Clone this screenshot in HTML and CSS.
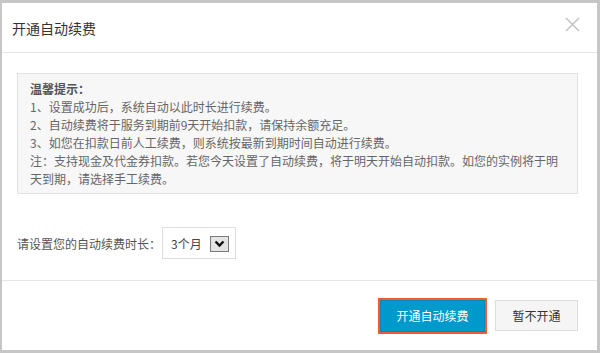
FILE: index.html
```html
<!DOCTYPE html>
<html lang="zh-CN">
<head>
    <meta charset="UTF-8">
    <title>开通自动续费</title>
    <link rel="stylesheet" href="styles.css">
</head>
<body>
    <div class="dialog">
        <div class="dialog-header">
            <h3 class="dialog-title">开通自动续费</h3>
            <span class="dialog-close">
                <svg width="15" height="15" viewBox="0 0 15 15">
                    <path d="M1 1 L14 14 M14 1 L1 14" stroke="#c4c4c4" stroke-width="1.6" fill="none"/>
                </svg>
            </span>
        </div>

        <div class="dialog-body">
            <div class="tips">
                <div class="tips-title">温馨提示：</div>
                <div>1、设置成功后，系统自动以此时长进行续费。</div>
                <div>2、自动续费将于服务到期前9天开始扣款，请保持余额充足。</div>
                <div>3、如您在扣款日前人工续费，则系统按最新到期时间自动进行续费。</div>
                <div>注：支持现金及代金券扣款。若您今天设置了自动续费，将于明天开始自动扣款。如您的实例将于明天到期，请选择手工续费。</div>
            </div>

            <div class="form-row">
                <span class="form-label">请设置您的自动续费时长：</span>
                <div class="select">
                    <span class="select-value">3个月</span>
                    <span class="select-arrow">
                        <svg width="11" height="8" viewBox="0 0 11 8">
                            <path d="M1.5 1.5 L5.5 5.5 L9.5 1.5" stroke="#111" stroke-width="2.4" fill="none"/>
                        </svg>
                    </span>
                </div>
            </div>
        </div>

        <div class="dialog-footer">
            <button class="btn btn-primary">开通自动续费</button>
            <button class="btn btn-default">暂不开通</button>
        </div>
    </div>
</body>
</html>
```

FILE: styles.css
```css
* {
    margin: 0;
    padding: 0;
    box-sizing: border-box;
}

body {
    font-family: "Noto Sans CJK SC", "Noto Sans", sans-serif;
    font-size: 12px;
    color: #555;
    background: #fff;
}

.dialog {
    width: 600px;
    height: 353px;
    border: 3px solid #c6c6c6;
    border-left-width: 2px;
    background: #fff;
    display: flex;
    flex-direction: column;
}

/* header */
.dialog-header {
    height: 50px;
    border-bottom: 1px solid #e5e5e5;
    display: flex;
    align-items: center;
    padding: 0 17px 0 10px;
}

.dialog-title {
    font-size: 14px;
    font-weight: normal;
    color: #333;
    line-height: 20px;
}

.dialog-close {
    margin-left: auto;
    align-self: flex-start;
    margin-top: 14px;
    display: flex;
}

/* body */
.dialog-body {
    padding: 20px 19px 21px 15px;
    border-bottom: 1px solid #e5e5e5;
}

.tips {
    background: #f7f7f7;
    border: 1px solid #e1e1e1;
    padding: 6px 15px 5px 12px;
    line-height: 18px;
    color: #666;
}

.tips-title {
    font-weight: bold;
    color: #555;
}

.form-row {
    margin-top: 33px;
    display: flex;
    align-items: center;
}

.form-label {
    color: #555;
}

.select {
    margin-left: 1px;
    width: 74px;
    height: 32px;
    border: 1px solid #ddd;
    display: flex;
    align-items: center;
    justify-content: space-between;
    padding: 0 6px 0 8px;
    color: #444;
}

.select-arrow {
    width: 19px;
    height: 16px;
    margin-top: 2px;
    border: 1px solid #7a7a7a;
    background: #e4e4e4;
    display: flex;
    align-items: center;
    justify-content: center;
}

/* footer */
.dialog-footer {
    flex: 1;
    display: flex;
    align-items: center;
    justify-content: flex-end;
    gap: 10px;
    padding-right: 19px;
}

.btn {
    font-family: inherit;
    font-size: 12px;
    height: 32px;
    border: 1px solid;
    cursor: pointer;
}

.btn-primary {
    width: 105px;
    background: #0099cc;
    border-color: #0088bb;
    color: #fff;
    outline: 2px solid #f05a35;
}

.btn-default {
    width: 83px;
    height: 31px;
    background: #f5f5f5;
    border-color: #ddd;
    color: #333;
}
```
